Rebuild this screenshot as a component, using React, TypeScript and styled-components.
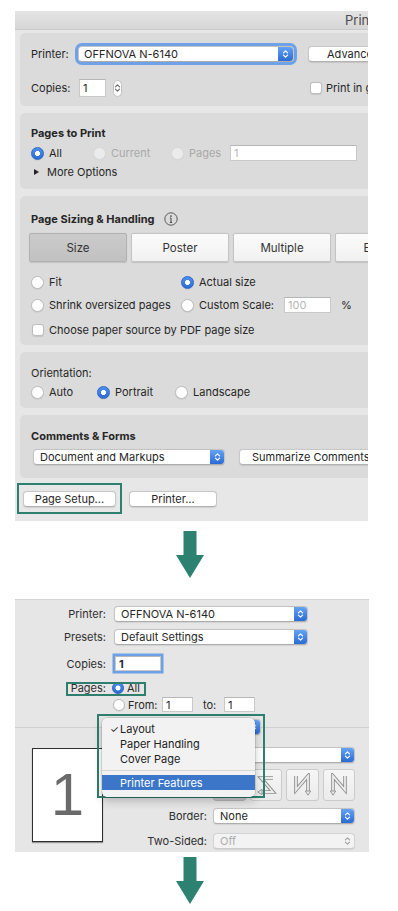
import React from "react";
import styled, { createGlobalStyle } from "styled-components";

const FONT = `Inter, "Liberation Sans", Arial, sans-serif`;
const GREEN = "#2e7f6d";

const GlobalStyle = createGlobalStyle`
  *, *::before, *::after { box-sizing: border-box; }
  html, body { margin: 0; padding: 0; background: #ffffff; }
  body {
    font-family: ${FONT};
    font-size: 11px;
    color: #262626;
  }
`;

const Page = styled.div`
  width: 398px;
  min-height: 911px;
  padding: 11px 0 0 15px;
  display: flex;
  flex-direction: column;
  align-items: flex-start;
`;

/* ---------- shared controls ---------- */

const ChevronSvg = styled.svg`
  display: block;
  flex: none;
`;

function Chevrons({ color = "#ffffff" }: { color?: string }) {
  return (
    <ChevronSvg width="7" height="10" viewBox="0 0 7 10" fill="none">
      <path
        d="M1.4 3.9L3.5 1.8L5.6 3.9M1.4 6.1L3.5 8.2L5.6 6.1"
        stroke={color}
        strokeWidth="1.15"
        strokeLinecap="round"
        strokeLinejoin="round"
      />
    </ChevronSvg>
  );
}

const SelectBox = styled.div<{ $w: number; $h: number; $focus?: boolean; $off?: boolean; $ml?: number }>`
  flex: none;
  display: flex;
  width: ${(p) => p.$w}px;
  height: ${(p) => p.$h}px;
  margin-left: ${(p) => p.$ml ?? 0}px;
  background: ${(p) => (p.$off ? "#f3f3f3" : "#ffffff")};
  border: 1px solid ${(p) => (p.$off ? "#d4d4d4" : "#c4c4c4")};
  border-bottom-color: ${(p) => (p.$off ? "#cccccc" : "#adadad")};
  border-radius: 4px;
  overflow: hidden;
  box-shadow: ${(p) =>
    p.$focus ? "0 0 0 3px rgba(86, 148, 232, 0.82)" : "0 0.5px 1px rgba(0, 0, 0, 0.08)"};
`;

const SelectValue = styled.span<{ $pad: number; $off?: boolean }>`
  flex: 1;
  min-width: 0;
  display: flex;
  align-items: center;
  padding-left: ${(p) => p.$pad}px;
  color: ${(p) => (p.$off ? "#adadad" : "#262626")};
  white-space: nowrap;
  overflow: hidden;
`;

const StepperCap = styled.span<{ $w: number; $off?: boolean }>`
  flex: none;
  width: ${(p) => p.$w}px;
  display: flex;
  align-items: center;
  justify-content: center;
  background: ${(p) => (p.$off ? "transparent" : "linear-gradient(#64a3f5, #2a6bd5)")};
`;

function Select({
  w,
  h = 16,
  value,
  focus,
  off,
  pad = 6,
  capW = 14,
  ml,
}: {
  w: number;
  h?: number;
  value?: string;
  focus?: boolean;
  off?: boolean;
  pad?: number;
  capW?: number;
  ml?: number;
}) {
  return (
    <SelectBox $w={w} $h={h} $focus={focus} $off={off} $ml={ml}>
      <SelectValue $pad={pad} $off={off}>
        {value}
      </SelectValue>
      <StepperCap $w={capW} $off={off}>
        <Chevrons color={off ? "#a2a2a2" : "#ffffff"} />
      </StepperCap>
    </SelectBox>
  );
}

const PushButton = styled.div<{ $w?: number; $pad?: number; $ml?: number }>`
  flex: none;
  height: 16px;
  width: ${(p) => (p.$w ? `${p.$w}px` : "auto")};
  margin-left: ${(p) => p.$ml ?? 0}px;
  padding: 0 ${(p) => p.$pad ?? 0}px;
  display: flex;
  align-items: center;
  justify-content: ${(p) => (p.$w ? "center" : "flex-start")};
  background: #ffffff;
  border: 1px solid #c8c8c8;
  border-bottom-color: #b3b3b3;
  border-radius: 4px;
  box-shadow: 0 0.5px 1px rgba(0, 0, 0, 0.1);
  white-space: nowrap;
`;

const TextField = styled.div<{ $w: number; $h: number; $dim?: boolean; $focus?: boolean; $bold?: boolean; $ml?: number }>`
  flex: none;
  width: ${(p) => p.$w}px;
  height: ${(p) => p.$h}px;
  margin-left: ${(p) => p.$ml ?? 0}px;
  padding-left: 3px;
  display: flex;
  align-items: center;
  background: #ffffff;
  border: 1px solid #c9c9c9;
  border-top-color: #b7b7b7;
  color: ${(p) => (p.$dim ? "#b6b6b6" : "#262626")};
  font-weight: ${(p) => (p.$bold ? 700 : 400)};
  box-shadow: ${(p) => (p.$focus ? "0 0 0 2.5px rgba(86, 148, 232, 0.85)" : "none")};
`;

const RadioDot = styled.span<{ $on?: boolean; $dim?: boolean; $size?: number }>`
  flex: none;
  width: ${(p) => p.$size ?? 13}px;
  height: ${(p) => p.$size ?? 13}px;
  border-radius: 50%;
  border: 1px solid ${(p) => (p.$on ? "#2b68c8" : p.$dim ? "#d8d8d8" : "#bdbdbd")};
  background: ${(p) =>
    p.$on
      ? "radial-gradient(circle, #ffffff 0 2.2px, rgba(255,255,255,0) 2.8px), linear-gradient(#4d90f0, #2a6bd2)"
      : p.$dim
      ? "#ebebeb"
      : "#ffffff"};
  box-shadow: 0 0.5px 1px rgba(0, 0, 0, ${(p) => (p.$dim ? 0.04 : 0.12)});
`;

const Option = styled.div<{ $w?: number; $dim?: boolean; $gap?: number; $ml?: number }>`
  flex: none;
  width: ${(p) => (p.$w ? `${p.$w}px` : "auto")};
  margin-left: ${(p) => p.$ml ?? 0}px;
  display: flex;
  align-items: center;
  gap: ${(p) => p.$gap ?? 5}px;
  color: ${(p) => (p.$dim ? "#a9a9a9" : "#262626")};
  white-space: nowrap;
`;

const CheckBox = styled.span<{ $ml?: number }>`
  flex: none;
  width: 12px;
  height: 12px;
  margin-left: ${(p) => p.$ml ?? 0}px;
  border-radius: 3px;
  background: #ffffff;
  border: 1px solid #bdbdbd;
  box-shadow: 0 0.5px 1px rgba(0, 0, 0, 0.1);
`;

const Marked = styled.div<{ $t: number; $r: number; $b: number; $l: number }>`
  position: relative;
  flex: none;
  display: flex;
  align-items: center;
  &::after {
    content: "";
    position: absolute;
    top: ${(p) => p.$t}px;
    right: ${(p) => p.$r}px;
    bottom: ${(p) => p.$b}px;
    left: ${(p) => p.$l}px;
    border: 2px solid ${GREEN};
    pointer-events: none;
  }
`;

/* ---------- first screenshot: Acrobat print dialog ---------- */

const Shot1 = styled.section`
  flex: none;
  width: 353px;
  height: 510px;
  overflow: hidden;
  background: #e7e7e7;
`;

const Window = styled.div`
  width: 440px;
  display: flex;
  flex-direction: column;
`;

const TitleBar = styled.div`
  height: 19px;
  padding-left: 330px;
  background: linear-gradient(#e4e4e4, #d6d6d6);
  border-bottom: 1px solid #cacaca;
  font-size: 13px;
  line-height: 18px;
  color: #4b4b4b;
  white-space: nowrap;
`;

const PanelStack = styled.div`
  display: flex;
  flex-direction: column;
  gap: 7px;
  padding: 3px 0 0 5px;
`;

const Panel = styled.div<{ $h: number; $pt: number }>`
  height: ${(p) => p.$h}px;
  padding: ${(p) => p.$pt}px 0 0 11px;
  background: #dbdbdb;
  border-radius: 5px;
  display: flex;
  flex-direction: column;
`;

const Row = styled.div<{ $h: number; $mt?: number }>`
  display: flex;
  align-items: center;
  height: ${(p) => p.$h}px;
  margin-top: ${(p) => p.$mt ?? 0}px;
  white-space: nowrap;
`;

const Cell = styled.div<{ $w: number }>`
  flex: none;
  width: ${(p) => p.$w}px;
  display: flex;
  align-items: center;
`;

const Label = styled.span<{ $w?: number }>`
  flex: none;
  width: ${(p) => (p.$w ? `${p.$w}px` : "auto")};
  white-space: nowrap;
`;

const SectionTitle = styled.div`
  height: 16px;
  display: flex;
  align-items: center;
  gap: 9px;
  font-weight: 700;
  white-space: nowrap;
`;

const PlainTitle = styled.div`
  height: 16px;
  display: flex;
  align-items: center;
`;

const InfoSvg = styled.svg`
  display: block;
  flex: none;
`;

function InfoIcon() {
  return (
    <InfoSvg width="14" height="14" viewBox="0 0 14 14" fill="none">
      <circle cx="7" cy="7" r="6.2" stroke="#5a5a5a" strokeWidth="1" />
      <circle cx="7" cy="4.1" r="0.85" fill="#4a4a4a" />
      <path d="M7 6V10.4M5.8 10.4H8.2M5.9 6H7" stroke="#4a4a4a" strokeWidth="1" />
    </InfoSvg>
  );
}

const Disclosure = styled.span`
  flex: none;
  width: 0;
  height: 0;
  margin: 0 8px 0 3px;
  border-left: 5px solid #262626;
  border-top: 3.5px solid transparent;
  border-bottom: 3.5px solid transparent;
`;

const SpinCapsule = styled.span`
  flex: none;
  width: 9px;
  height: 17px;
  margin-left: 7px;
  border: 1px solid #c2c2c2;
  border-radius: 4.5px;
  background: #ffffff;
  display: flex;
  align-items: center;
  justify-content: center;
`;

const TabRow = styled.div`
  display: flex;
  gap: 4px;
  margin: 6px 0 0 -2px;
`;

const Tab = styled.div<{ $on?: boolean }>`
  flex: none;
  width: 98px;
  height: 29px;
  display: flex;
  align-items: center;
  justify-content: center;
  border: 1px solid ${(p) => (p.$on ? "#b2b2b2" : "#c4c4c4")};
  border-radius: 2px;
  background: ${(p) => (p.$on ? "linear-gradient(#cbcbcb, #c1c1c1)" : "linear-gradient(#fbfbfb, #f1f1f1)")};
  box-shadow: 0 0.5px 1px rgba(0, 0, 0, 0.12);
  color: #333333;
  font-size: 11.5px;
`;

const Percent = styled.span`
  margin-left: 10px;
`;

const Footer = styled.div`
  display: flex;
  gap: 13px;
  padding: 13px 0 0 8px;
`;

/* ---------- arrows ---------- */

const ArrowSvg = styled.svg<{ $mt: number }>`
  display: block;
  flex: none;
  margin: ${(p) => p.$mt}px 0 0 161px;
`;

function DownArrow({ mt }: { mt: number }) {
  return (
    <ArrowSvg $mt={mt} width="28" height="47" viewBox="0 0 28 47">
      <path d="M7.5 0H20.5V24H28L14 47L0 24H7.5Z" fill="#2d8170" />
    </ArrowSvg>
  );
}

/* ---------- second screenshot: macOS print dialog ---------- */

const Shot2 = styled.section`
  flex: none;
  position: relative;
  width: 354px;
  height: 253px;
  margin-top: 21px;
  overflow: hidden;
  background: #e6e6e6;
  border-top: 1px solid #d3d3d3;
  display: flex;
  flex-direction: column;
`;

const FormTop = styled.div`
  display: flex;
  flex-direction: column;
  padding-top: 6px;
`;

const FormRow = styled.div<{ $h: number; $mt?: number }>`
  display: flex;
  align-items: center;
  gap: 7px;
  height: ${(p) => p.$h}px;
  margin-top: ${(p) => p.$mt ?? 0}px;
  white-space: nowrap;
`;

const RightLabel = styled.span<{ $w?: number }>`
  flex: none;
  width: ${(p) => (p.$w ? `${p.$w}px` : "auto")};
  text-align: right;
  white-space: nowrap;
  color: #2e2e2e;
`;

const ToLabel = styled.span`
  flex: none;
  margin-left: 3px;
  width: 21px;
`;

const SeparatorRow = styled.div`
  display: flex;
  align-items: center;
  height: 16px;
  margin-top: 7px;
  &::before,
  &::after {
    content: "";
    flex: 1;
    height: 1px;
    background: #d0d0d0;
  }
`;

const Lower = styled.div`
  display: flex;
  align-items: flex-start;
  padding: 12px 14px 0 17px;
`;

const Thumb = styled.div`
  flex: none;
  width: 71px;
  height: 94px;
  margin-top: 1px;
  background: #ffffff;
  border: 1px solid #2f2f2f;
  box-shadow: 0 1px 1px rgba(0, 0, 0, 0.35);
  display: flex;
  align-items: center;
  justify-content: center;
  font-family: "Liberation Sans", Arial, sans-serif;
  font-size: 60px;
  line-height: 1;
  color: #6a6a6a;
`;

const LowerForm = styled.div`
  flex: 1;
  display: flex;
  flex-direction: column;
`;

const LowerRow = styled.div<{ $h: number; $mt?: number }>`
  display: grid;
  grid-template-columns: 1fr 142px;
  column-gap: 6px;
  align-items: center;
  height: ${(p) => p.$h}px;
  margin-top: ${(p) => p.$mt ?? 0}px;
  white-space: nowrap;
`;

const DirGrid = styled.div`
  display: grid;
  grid-template-columns: repeat(4, 1fr);
  gap: 4px;
  height: 32px;
`;

const DirButton = styled.div<{ $on?: boolean }>`
  display: flex;
  align-items: center;
  justify-content: center;
  border: 1px solid ${(p) => (p.$on ? "#b3b3b3" : "#cbcbcb")};
  border-radius: 3px;
  background: ${(p) => (p.$on ? "linear-gradient(#d2d2d2, #c8c8c8)" : "linear-gradient(#f6f6f6, #ebebeb)")};
`;

const DIRS = [
  { line: "M4 5H16L4 19H15", head: "M15 16.3L19.2 19L15 21.7Z" },
  { line: "M18 5H6L18 19H7", head: "M7 16.3L2.8 19L7 21.7Z" },
  { line: "M5 3V17L17 3V18", head: "M14.3 18L17 22.2L19.7 18Z" },
  { line: "M17 3V17L5 3V18", head: "M2.3 18L5 22.2L7.7 18Z" },
];

function DirIcon({ idx }: { idx: number }) {
  const d = DIRS[idx];
  return (
    <svg width="22" height="25" viewBox="0 0 22 25" fill="none">
      <path d={d.line} stroke="#8f8f8f" strokeWidth="3.6" strokeLinejoin="miter" />
      <path d={d.line} stroke="#ececec" strokeWidth="1.8" strokeLinejoin="miter" />
      <path d={d.head} fill="#ececec" stroke="#8f8f8f" strokeWidth="0.9" />
    </svg>
  );
}

const Callout = styled.div`
  position: absolute;
  left: 82px;
  top: 114px;
  width: 168px;
  height: 84px;
  padding: 2px 0 0 3px;
  border: 2px solid ${GREEN};
  z-index: 2;
`;

const Menu = styled.div`
  width: 153px;
  height: 79px;
  padding-top: 3px;
  display: flex;
  flex-direction: column;
  background: rgba(242, 242, 242, 0.99);
  border-radius: 5px;
  box-shadow: 0 0 0 0.5px rgba(0, 0, 0, 0.2), 0 4px 10px rgba(0, 0, 0, 0.22);
  font-size: 11px;
  color: #222222;
`;

const MenuItem = styled.div<{ $active?: boolean }>`
  height: 15px;
  display: flex;
  align-items: center;
  padding-left: 8px;
  background: ${(p) => (p.$active ? "#3b76c8" : "transparent")};
  color: ${(p) => (p.$active ? "#ffffff" : "#222222")};
  white-space: nowrap;
`;

const CheckMark = styled.span`
  flex: none;
  width: 10px;
  font-size: 10px;
`;

const MenuSep = styled.div`
  height: 9px;
  display: flex;
  align-items: center;
  &::after {
    content: "";
    flex: 1;
    height: 1px;
    background: #d6d6d6;
  }
`;

export default function App() {
  return (
    <>
      <GlobalStyle />
      <Page>
        <Shot1>
          <Window>
            <TitleBar>Print</TitleBar>
            <PanelStack>
              <Panel $h={73} $pt={11}>
                <Row $h={20}>
                  <Cell $w={277}>
                    <Label $w={47}>Printer:</Label>
                    <Select w={216} value="OFFNOVA N-6140" focus capW={15} pad={5} />
                  </Cell>
                  <PushButton $pad={18}>Advanced...</PushButton>
                </Row>
                <Row $h={18} $mt={15}>
                  <Cell $w={277}>
                    <Label $w={48}>Copies:</Label>
                    <TextField $w={27} $h={18}>1</TextField>
                    <SpinCapsule>
                      <Chevrons color="#6a6a6a" />
                    </SpinCapsule>
                  </Cell>
                  <Option $gap={4}>
                    <CheckBox $ml={2} />
                    Print in grayscale
                  </Option>
                </Row>
              </Panel>

              <Panel $h={76} $pt={12}>
                <SectionTitle>Pages to Print</SectionTitle>
                <Row $h={16} $mt={4}>
                  <Option $w={62}>
                    <RadioDot $on />
                    All
                  </Option>
                  <Option $w={78} $dim>
                    <RadioDot $dim />
                    Current
                  </Option>
                  <Option $w={59} $dim>
                    <RadioDot $dim />
                    Pages
                  </Option>
                  <TextField $w={127} $h={16} $dim>
                    1
                  </TextField>
                </Row>
                <Row $h={16} $mt={3}>
                  <Disclosure />
                  More Options
                </Row>
              </Panel>

              <Panel $h={149} $pt={15}>
                <SectionTitle>
                  Page Sizing &amp; Handling
                  <InfoIcon />
                </SectionTitle>
                <TabRow>
                  <Tab $on>Size</Tab>
                  <Tab>Poster</Tab>
                  <Tab>Multiple</Tab>
                  <Tab>Booklet</Tab>
                </TabRow>
                <Row $h={16} $mt={12}>
                  <Option $w={150}>
                    <RadioDot />
                    Fit
                  </Option>
                  <Option>
                    <RadioDot $on />
                    Actual size
                  </Option>
                </Row>
                <Row $h={16} $mt={7}>
                  <Option $w={150}>
                    <RadioDot />
                    Shrink oversized pages
                  </Option>
                  <Option $w={103}>
                    <RadioDot />
                    Custom Scale:
                  </Option>
                  <TextField $w={47} $h={16} $dim>
                    100
                  </TextField>
                  <Percent>%</Percent>
                </Row>
                <Row $h={16} $mt={9}>
                  <Option>
                    <CheckBox $ml={1} />
                    Choose paper source by PDF page size
                  </Option>
                </Row>
              </Panel>

              <Panel $h={56} $pt={13}>
                <PlainTitle>Orientation:</PlainTitle>
                <Row $h={16} $mt={3}>
                  <Option $w={66}>
                    <RadioDot />
                    Auto
                  </Option>
                  <Option $w={78}>
                    <RadioDot $on />
                    Portrait
                  </Option>
                  <Option>
                    <RadioDot />
                    Landscape
                  </Option>
                </Row>
              </Panel>

              <Panel $h={63} $pt={13}>
                <SectionTitle>Comments &amp; Forms</SectionTitle>
                <Row $h={16} $mt={5}>
                  <Select w={192} value="Document and Markups" ml={2} />
                  <PushButton $pad={12} $ml={14}>
                    Summarize Comments
                  </PushButton>
                </Row>
              </Panel>
            </PanelStack>

            <Footer>
              <Marked $t={-8} $r={-6} $b={-7} $l={-6}>
                <PushButton $w={93}>Page Setup...</PushButton>
              </Marked>
              <PushButton $w={88}>Printer...</PushButton>
            </Footer>
          </Window>
        </Shot1>

        <DownArrow mt={10} />

        <Shot2>
          <FormTop>
            <FormRow $h={16}>
              <RightLabel $w={91}>Printer:</RightLabel>
              <Select w={194} value="OFFNOVA N-6140" capW={13} ml={1} />
            </FormRow>
            <FormRow $h={16} $mt={7}>
              <RightLabel $w={91}>Presets:</RightLabel>
              <Select w={194} value="Default Settings" capW={13} ml={1} />
            </FormRow>
            <FormRow $h={19} $mt={9}>
              <RightLabel $w={91}>Copies:</RightLabel>
              <TextField $w={46} $h={15} $focus $bold $ml={2}>
                1
              </TextField>
            </FormRow>
            <FormRow $h={15} $mt={7}>
              <Marked $t={1} $r={-6} $b={-1} $l={51}>
                <RightLabel $w={91}>Pages:</RightLabel>
                <Option $gap={3} $ml={6}>
                  <RadioDot $on $size={12} />
                  All
                </Option>
              </Marked>
            </FormRow>
            <FormRow $h={15} $mt={2}>
              <RightLabel $w={91} />
              <Option $w={49} $gap={3}>
                <RadioDot $size={12} />
                From:
              </Option>
              <TextField $w={31} $h={15} $ml={-7}>
                1
              </TextField>
              <ToLabel>to:</ToLabel>
              <TextField $w={31} $h={15} $ml={-7}>
                1
              </TextField>
            </FormRow>
          </FormTop>

          <SeparatorRow>
            <Select w={138} capW={13} />
          </SeparatorRow>

          <Lower>
            <Thumb>1</Thumb>
            <LowerForm>
              <LowerRow $h={16}>
                <RightLabel />
                <Select w={142} capW={13} />
              </LowerRow>
              <LowerRow $h={32} $mt={6}>
                <RightLabel />
                <DirGrid>
                  {[0, 1, 2, 3].map((i) => (
                    <DirButton key={i} $on={i === 0}>
                      <DirIcon idx={i} />
                    </DirButton>
                  ))}
                </DirGrid>
              </LowerRow>
              <LowerRow $h={16} $mt={7}>
                <RightLabel>Border:</RightLabel>
                <Select w={142} value="None" capW={13} />
              </LowerRow>
              <LowerRow $h={16} $mt={9}>
                <RightLabel>Two-Sided:</RightLabel>
                <Select w={142} value="Off" capW={13} off />
              </LowerRow>
            </LowerForm>
          </Lower>

          <Callout>
            <Menu>
              <MenuItem>
                <CheckMark>✓</CheckMark>Layout
              </MenuItem>
              <MenuItem>
                <CheckMark />
                Paper Handling
              </MenuItem>
              <MenuItem>
                <CheckMark />
                Cover Page
              </MenuItem>
              <MenuSep />
              <MenuItem $active>
                <CheckMark />
                Printer Features
              </MenuItem>
            </Menu>
          </Callout>
        </Shot2>

        <DownArrow mt={5} />
      </Page>
    </>
  );
}
